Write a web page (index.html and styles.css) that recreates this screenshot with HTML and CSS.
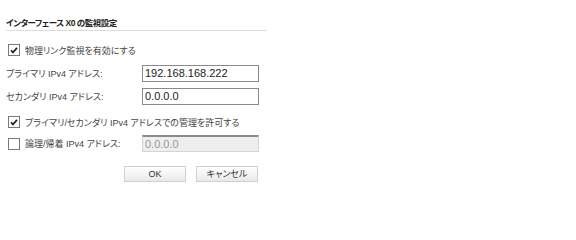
FILE: index.html
```html
<!DOCTYPE html>
<html lang="ja">
<head>
<meta charset="utf-8">
<title>インターフェース X0 の監視設定</title>
<link rel="stylesheet" href="styles.css">
</head>
<body>
<div class="panel">
  <div class="title">インターフェース X0 の監視設定</div>

  <div class="row check-row first">
    <span class="cb checked"><svg viewBox="0 0 11 11" width="11" height="11"><path d="M2.2 5.2 L4.4 7.6 L8.8 2.6" fill="none" stroke="#222" stroke-width="1.8"/></svg></span>
    <span class="cb-label">物理リンク監視を有効にする</span>
  </div>

  <div class="row field-row r-primary">
    <span class="label">プライマリ IPv4 アドレス:</span>
    <span class="input">192.168.168.222</span>
  </div>

  <div class="row field-row r-secondary">
    <span class="label">セカンダリ IPv4 アドレス:</span>
    <span class="input">0.0.0.0</span>
  </div>

  <div class="row check-row r-manage">
    <span class="cb checked"><svg viewBox="0 0 11 11" width="11" height="11"><path d="M2.2 5.2 L4.4 7.6 L8.8 2.6" fill="none" stroke="#222" stroke-width="1.8"/></svg></span>
    <span class="cb-label">プライマリ/セカンダリ IPv4 アドレスでの管理を許可する</span>
  </div>

  <div class="row field-row r-logical">
    <span class="label check-label"><span class="cb"></span><span class="cb-label">論理/帰着 IPv4 アドレス:</span></span>
    <span class="input disabled">0.0.0.0</span>
  </div>

  <div class="buttons">
    <span class="btn">OK</span>
    <span class="btn">キャンセル</span>
  </div>
</div>
</body>
</html>
```

FILE: styles.css
```css
html, body {
  margin: 0;
  padding: 0;
  background: #ffffff;
}

body {
  font-family: "Liberation Sans", "Noto Sans CJK JP", sans-serif;
  font-size: 9px;
  color: #444444;
  font-feature-settings: "palt";
}

.panel {
  width: 261px;
  margin-left: 6px;
  display: flex;
  flex-direction: column;
}

.title {
  margin-top: 17px;
  height: 12px;
  line-height: 12px;
  font-weight: bold;
  font-size: 8.5px;
  letter-spacing: -0.5px;
  color: #222222;
  border-bottom: 1px solid #dddddd;
  padding-bottom: 1px;
}

.row {
  display: flex;
  align-items: center;
}

.check-row {
  height: 14px;
}

.first {
  margin-top: 12px;
}

.field-row {
  height: 17px;
}

.r-primary { margin-top: 8px; }
.r-secondary { margin-top: 6px; }
.r-manage { margin-top: 10px; }
.r-logical { margin-top: 6px; }

.cb {
  width: 10px;
  height: 10px;
  border: 1px solid #7a7a7a;
  background: #ffffff;
  margin-left: 2px;
  margin-right: 5px;
  display: inline-flex;
  align-items: center;
  justify-content: center;
  box-sizing: content-box;
  flex: none;
}

.cb svg {
  display: block;
}

.cb-label {
  white-space: nowrap;
}

.label {
  width: 136px;
  flex: none;
  white-space: nowrap;
  display: flex;
  align-items: center;
}

.input {
  width: 113px;
  height: 15px;
  line-height: 15px;
  border: 1px solid #8a8a8a;
  padding-left: 2px;
  font-family: "Liberation Sans", sans-serif;
  font-size: 11px;
  color: #222222;
  box-sizing: content-box;
}

.input.disabled {
  background: #eeeeee;
  border-color: #d4d4d4;
  border-top: 2px solid #8a8a8a;
  height: 14px;
  line-height: 14px;
  color: #999999;
}

.buttons {
  margin-top: 14px;
  display: flex;
  justify-content: flex-end;
  gap: 10px;
  padding-right: 9px;
}

.btn {
  width: 60px;
  height: 14px;
  line-height: 14px;
  text-align: center;
  border: 1px solid #d0d0d0;
  background: linear-gradient(#ffffff, #e9e9e9);
  font-size: 9px;
  color: #333333;
}
```
